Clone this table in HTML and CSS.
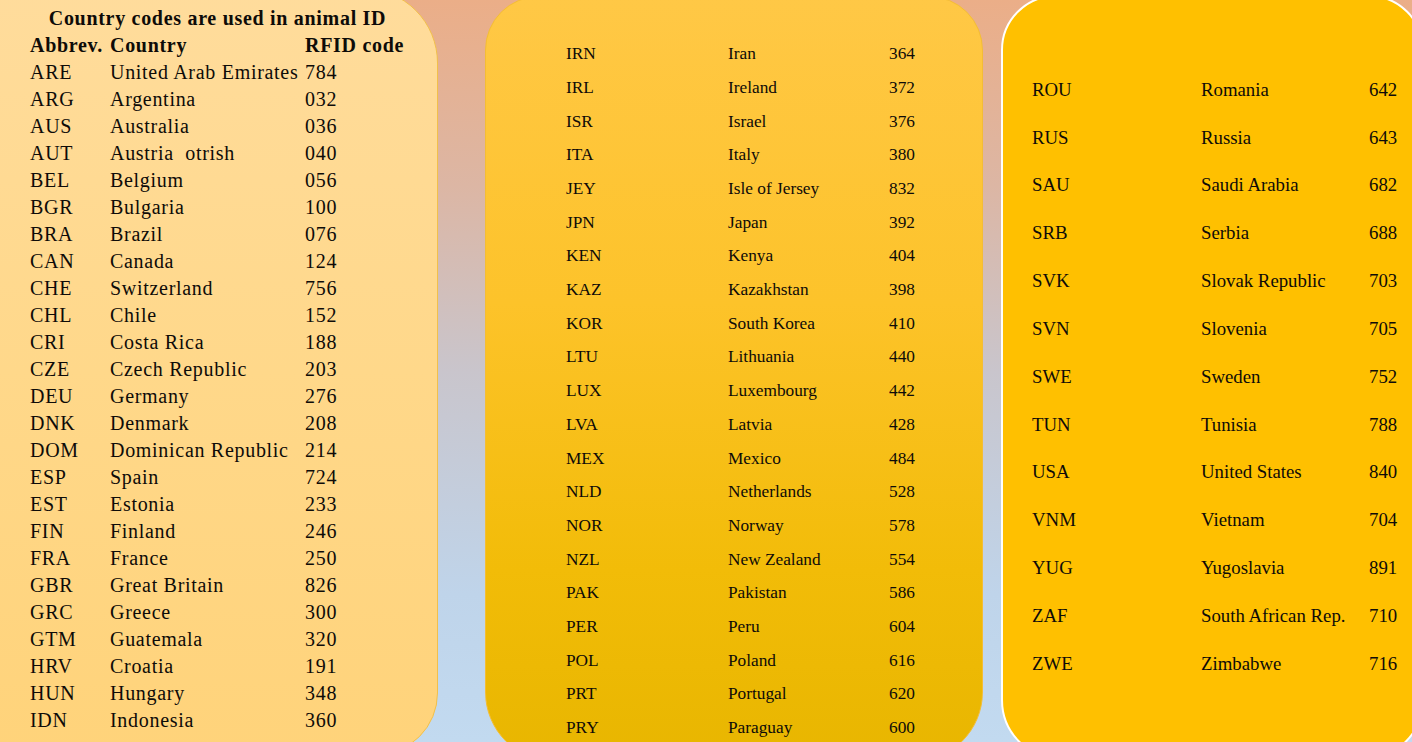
FILE: index.html
```html
<!DOCTYPE html>
<html lang="en">
<head>
<meta charset="utf-8">
<title>Country codes are used in animal ID</title>
<link rel="stylesheet" href="styles.css">
</head>
<body>
<div class="page">
  <section class="panel panel-left">
    <div class="grid grid-left">
      <div class="title">Country codes are used in animal ID</div>
      <div class="head">Abbrev.</div><div class="head">Country</div><div class="head">RFID code</div>
      <div>ARE</div><div>United Arab Emirates</div><div>784</div>
      <div>ARG</div><div>Argentina</div><div>032</div>
      <div>AUS</div><div>Australia</div><div>036</div>
      <div>AUT</div><div>Austria&nbsp; otrish</div><div>040</div>
      <div>BEL</div><div>Belgium</div><div>056</div>
      <div>BGR</div><div>Bulgaria</div><div>100</div>
      <div>BRA</div><div>Brazil</div><div>076</div>
      <div>CAN</div><div>Canada</div><div>124</div>
      <div>CHE</div><div>Switzerland</div><div>756</div>
      <div>CHL</div><div>Chile</div><div>152</div>
      <div>CRI</div><div>Costa Rica</div><div>188</div>
      <div>CZE</div><div>Czech Republic</div><div>203</div>
      <div>DEU</div><div>Germany</div><div>276</div>
      <div>DNK</div><div>Denmark</div><div>208</div>
      <div>DOM</div><div>Dominican Republic</div><div>214</div>
      <div>ESP</div><div>Spain</div><div>724</div>
      <div>EST</div><div>Estonia</div><div>233</div>
      <div>FIN</div><div>Finland</div><div>246</div>
      <div>FRA</div><div>France</div><div>250</div>
      <div>GBR</div><div>Great Britain</div><div>826</div>
      <div>GRC</div><div>Greece</div><div>300</div>
      <div>GTM</div><div>Guatemala</div><div>320</div>
      <div>HRV</div><div>Croatia</div><div>191</div>
      <div>HUN</div><div>Hungary</div><div>348</div>
      <div>IDN</div><div>Indonesia</div><div>360</div>
    </div>
  </section>

  <section class="panel panel-mid">
    <div class="grid grid-mid">
      <div>IRN</div><div>Iran</div><div>364</div>
      <div>IRL</div><div>Ireland</div><div>372</div>
      <div>ISR</div><div>Israel</div><div>376</div>
      <div>ITA</div><div>Italy</div><div>380</div>
      <div>JEY</div><div>Isle of Jersey</div><div>832</div>
      <div>JPN</div><div>Japan</div><div>392</div>
      <div>KEN</div><div>Kenya</div><div>404</div>
      <div>KAZ</div><div>Kazakhstan</div><div>398</div>
      <div>KOR</div><div>South Korea</div><div>410</div>
      <div>LTU</div><div>Lithuania</div><div>440</div>
      <div>LUX</div><div>Luxembourg</div><div>442</div>
      <div>LVA</div><div>Latvia</div><div>428</div>
      <div>MEX</div><div>Mexico</div><div>484</div>
      <div>NLD</div><div>Netherlands</div><div>528</div>
      <div>NOR</div><div>Norway</div><div>578</div>
      <div>NZL</div><div>New Zealand</div><div>554</div>
      <div>PAK</div><div>Pakistan</div><div>586</div>
      <div>PER</div><div>Peru</div><div>604</div>
      <div>POL</div><div>Poland</div><div>616</div>
      <div>PRT</div><div>Portugal</div><div>620</div>
      <div>PRY</div><div>Paraguay</div><div>600</div>
    </div>
  </section>

  <section class="panel panel-right">
    <div class="grid grid-right">
      <div>ROU</div><div>Romania</div><div>642</div>
      <div>RUS</div><div>Russia</div><div>643</div>
      <div>SAU</div><div>Saudi Arabia</div><div>682</div>
      <div>SRB</div><div>Serbia</div><div>688</div>
      <div>SVK</div><div>Slovak Republic</div><div>703</div>
      <div>SVN</div><div>Slovenia</div><div>705</div>
      <div>SWE</div><div>Sweden</div><div>752</div>
      <div>TUN</div><div>Tunisia</div><div>788</div>
      <div>USA</div><div>United States</div><div>840</div>
      <div>VNM</div><div>Vietnam</div><div>704</div>
      <div>YUG</div><div>Yugoslavia</div><div>891</div>
      <div>ZAF</div><div>South African Rep.</div><div>710</div>
      <div>ZWE</div><div>Zimbabwe</div><div>716</div>
    </div>
  </section>
</div>
</body>
</html>
```

FILE: styles.css
```css
html, body {
  margin: 0;
  padding: 0;
}

body {
  width: 1412px;
  height: 742px;
  overflow: hidden;
  font-family: "Liberation Serif", "Times New Roman", serif;
  color: #0e0b08;
  background: linear-gradient(180deg, #ebae88 0%, #dcb6a4 25%, #c9c5cc 50%, #bfd4ea 80%, #c2daf0 100%);
}

.page {
  display: flex;
  align-items: flex-start;
  width: 1412px;
  height: 742px;
  overflow: hidden;
}

.panel {
  flex-shrink: 0;
  box-sizing: border-box;
}

.grid {
  display: grid;
  align-items: center;
  white-space: nowrap;
}

/* Left panel */
.panel-left {
  width: 478px;
  height: 767px;
  margin-left: -40px;
  margin-top: -12px;
  padding: 16px 32px 0 69px;
  border: 1px solid #f2c04a;
  border-radius: 0 75px 62px 0;
  background: linear-gradient(180deg, #ffdc9c 0%, #ffd88a 50%, #ffd37a 100%);
}

.grid-left {
  grid-template-columns: 80px 195px auto;
  grid-auto-rows: 27px;
  font-size: 20px;
  letter-spacing: 0.7px;
  line-height: 27px;
}

.title {
  grid-column: 1 / 4;
  text-align: center;
  font-weight: bold;
}

.head {
  font-weight: bold;
}

/* Middle panel */
.panel-mid {
  width: 498px;
  height: 766px;
  margin-left: 47px;
  margin-top: -4px;
  padding: 40.3px 0 0 80px;
  border: 1px solid #f4bd34;
  border-radius: 54px 54px 70px 70px;
  background: linear-gradient(180deg, #ffc846 0%, #fdc32a 40%, #f2bc08 75%, #e8b600 100%);
}

.grid-mid {
  grid-template-columns: 162px 161px auto;
  grid-auto-rows: 33.7px;
  font-size: 17.3px;
  line-height: 33.7px;
}

/* Right panel */
.panel-right {
  width: 423px;
  height: 765px;
  margin-left: 18px;
  margin-top: -5px;
  padding: 68.8px 0 0 29px;
  border: 2px solid #ffffff;
  border-radius: 55px 55px 60px 60px;
  background: #ffc000;
}

.grid-right {
  grid-template-columns: 169px 168px auto;
  grid-auto-rows: 47.83px;
  font-size: 18.8px;
  line-height: 47.83px;
}
```
